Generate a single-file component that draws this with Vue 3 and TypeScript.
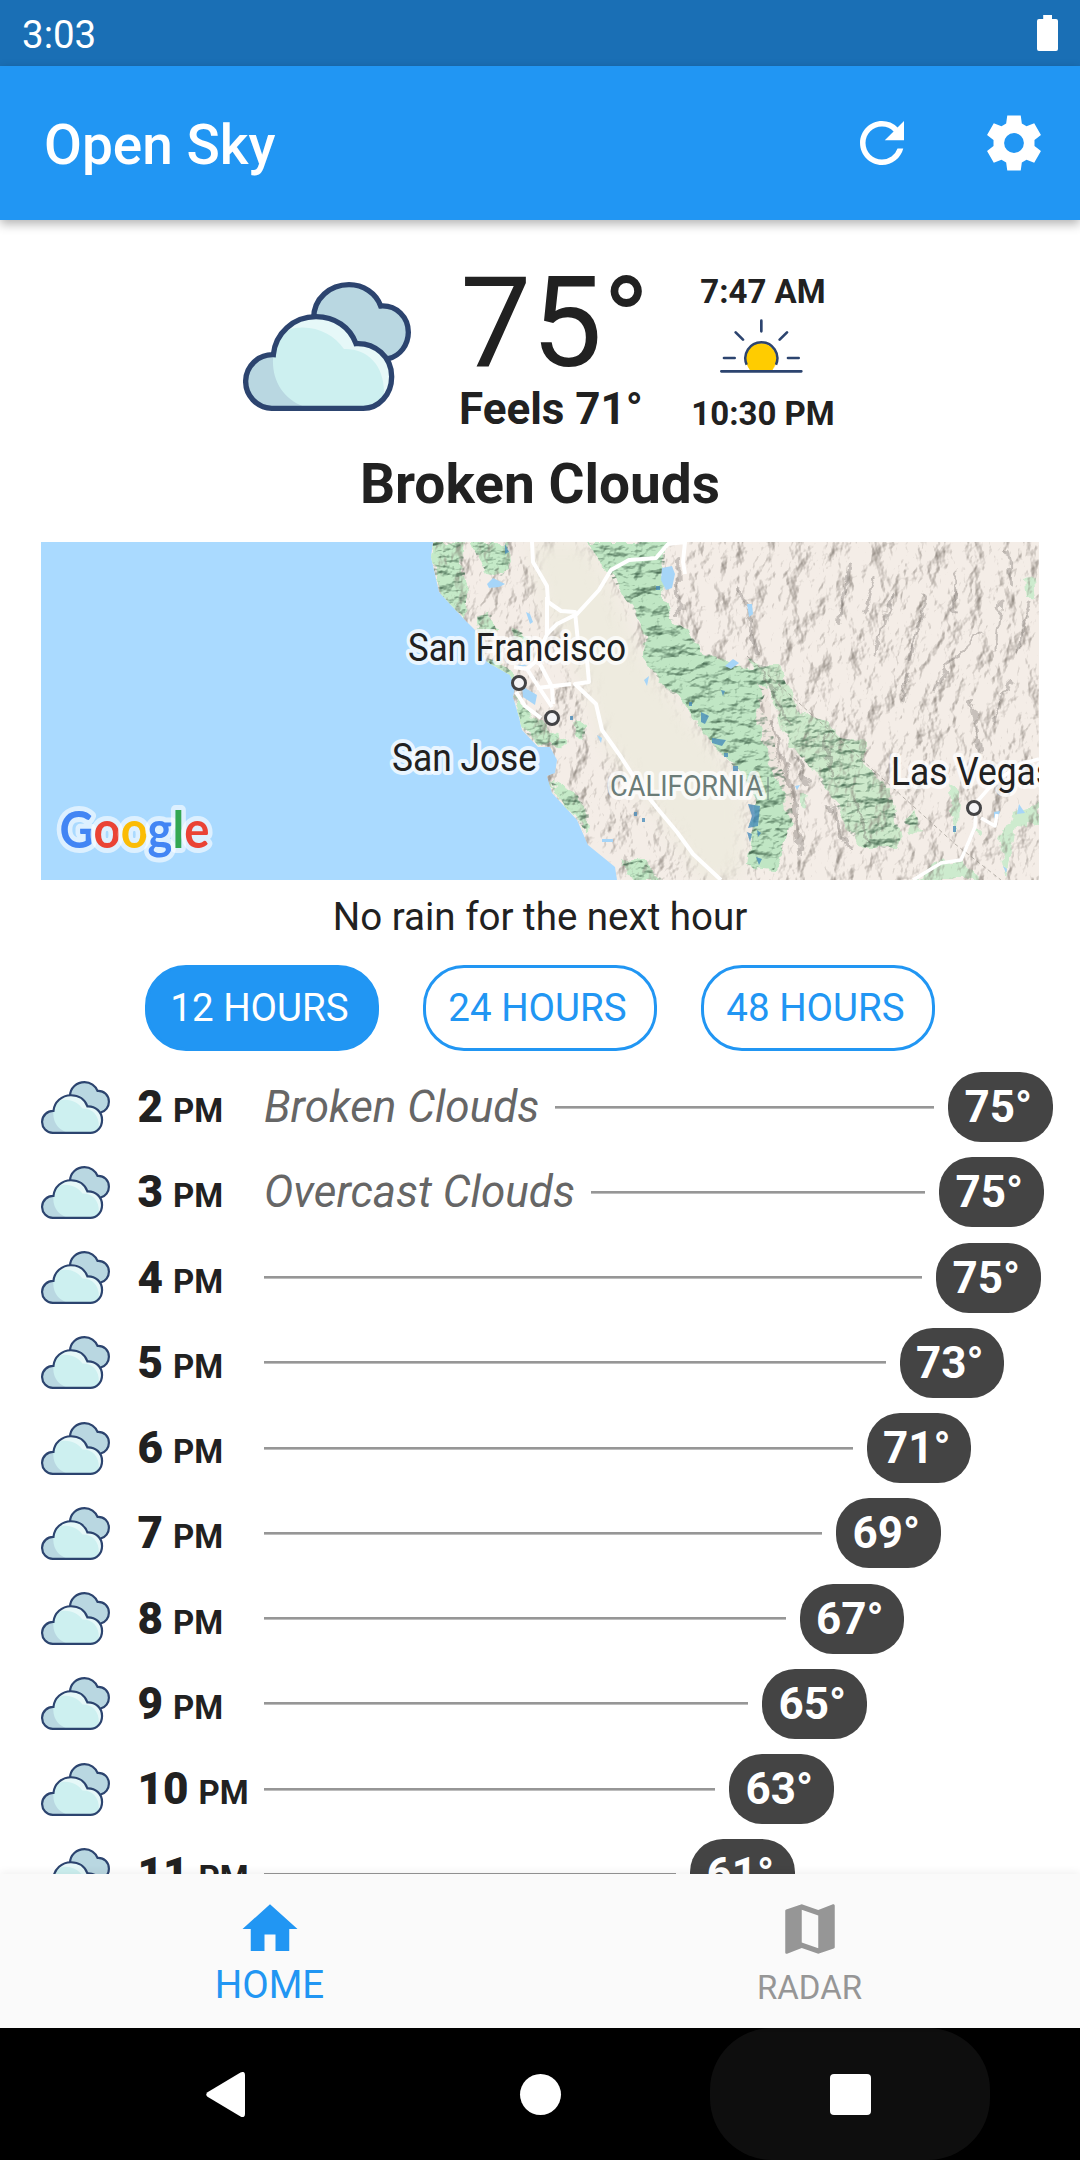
<script setup lang="ts">
import { ref } from 'vue'

interface Hour {
  hour: number
  label: string
  temp: number
  end: number
}

const ranges = ['12 HOURS', '24 HOURS', '48 HOURS']
const selected = ref(0)

// `end` is the left edge of the temperature pill inside the track
const hours: Hour[] = [
  { hour: 2, label: 'Broken Clouds', temp: 75, end: 684 },
  { hour: 3, label: 'Overcast Clouds', temp: 75, end: 675 },
  { hour: 4, label: '', temp: 75, end: 672 },
  { hour: 5, label: '', temp: 73, end: 635.5 },
  { hour: 6, label: '', temp: 71, end: 602.5 },
  { hour: 7, label: '', temp: 69, end: 572 },
  { hour: 8, label: '', temp: 67, end: 535.5 },
  { hour: 9, label: '', temp: 65, end: 498 },
  { hour: 10, label: '', temp: 63, end: 465 },
  { hour: 11, label: '', temp: 61, end: 426 },
]

const LAND =
  'M392 0 L390 15 L398 50 L422 76 L434 88 L438 108 L446 120 L469 133 L474 145 L472 155 L478 175 L481 188 L497 205 L509 205 L516 218 L514 231 L506 234 L511 251 L536 278 L547 303 L574 325 L576 338 L998 338 L998 0 Z'
const COAST_GREEN =
  'M392 0 L424 0 L422 20 L426 45 L424 74 L410 66 L398 50 L390 15 Z M430 0 L466 0 L469 18 L462 34 L445 30 L436 14 Z M436 74 L450 72 L456 90 L440 92 Z M446 116 L462 121 L472 132 L466 134 L450 124 Z M473 152 L490 172 L508 190 L525 200 L518 204 L498 204 L482 188 L478 172 Z M510 240 L536 252 L548 272 L546 290 L534 276 L514 250 Z M582 322 L600 318 L622 338 L592 338 Z M470 86 L484 92 L490 102 L480 104 Z M534 180 L545 183 L543 198 L536 194 Z'
const SIERRA =
  'M544 0 L628 0 L624 12 L622 52 L630 76 L648 90 L660 108 L684 120 L708 128 L720 124 L726 148 L718 166 L730 180 L736 216 L749 246 L752 276 L744 298 L733 328 L712 326 L706 322 L716 254 L699 230 L676 208 L658 184 L644 160 L626 148 L602 116 L605 95 L592 68 L579 50 L570 34 L558 18 Z'
const INYO =
  'M706 114 L722 124 L738 124 L752 160 L760 172 L782 178 L800 196 L824 200 L824 220 L850 250 L858 290 L860 306 L824 306 L808 290 L796 264 L776 234 L756 210 L742 186 L730 150 Z M863 280 L874 268 L880 286 L870 290 Z'
const EAST_GREEN =
  'M984 38 L992 36 L994 56 L986 54 Z M907 242 L918 250 L917 290 L911 280 Z M872 338 L896 320 L920 318 L940 338 Z M972 270 L984 266 L998 258 L998 286 L974 284 L966 338 L958 300 Z M932 286 L940 288 L936 294 Z M760 254 L768 254 L766 264 L760 262 Z'
const VALLEY =
  'M488 0 L545 0 L574 50 L600 110 L640 165 L690 225 L706 262 L700 338 L660 338 L640 305 L590 240 L556 190 L546 150 L534 125 L520 100 L502 60 Z'
</script>

<template>
  <div class="screen">
    <header class="status">
      <span>3:03</span>
      <svg class="battery" viewBox="0 0 21 36"><path fill="#fff" d="M6.2 0h8.8v4h4q2 0 2 2v28q0 2-2 2H2q-2 0-2-2V6q0-2 2-2h4.2z" /></svg>
    </header>

    <div class="appbar">
      <h1>Open Sky</h1>
      <svg class="icon" viewBox="0 0 24 24"><path fill="#fff" d="M17.65 6.35A7.958 7.958 0 0 0 12 4c-4.42 0-7.99 3.58-7.99 8s3.57 8 7.99 8c3.73 0 6.84-2.55 7.73-6h-2.08A5.99 5.99 0 0 1 12 18c-3.31 0-6-2.69-6-6s2.69-6 6-6c1.66 0 3.14.69 4.22 1.78L13 11h7V4l-2.35 2.35z" /></svg>
      <svg class="icon" viewBox="0 0 24 24"><path fill="#fff" fill-rule="evenodd" d="M9.55 2 L14.45 2 L14.85 4.95 L16.55 5.95 L19.35 4.85 L21.8 9.1 L19.45 10.95 L19.45 13.05 L21.8 14.9 L19.35 19.15 L16.55 18.05 L14.85 19.05 L14.45 22 L9.55 22 L9.15 19.05 L7.45 18.05 L4.65 19.15 L2.2 14.9 L4.55 13.05 L4.55 10.95 L2.2 9.1 L4.65 4.85 L7.45 5.95 L9.15 4.95 Z M12 8.4 A3.6 3.6 0 1 0 12 15.6 A3.6 3.6 0 1 0 12 8.4 Z" /></svg>
    </div>

    <svg width="0" height="0" class="defs">
      <symbol id="clouds" viewBox="69 96 504 387">
        <path fill="#b9d7e1" stroke="#2c446f" stroke-width="16" d="M281 205C281 145 330 104 387 104C430 104 468 130 482 168C530 165 565 202 565 247C565 285 540 318 505 326L400 330Z" />
        <path fill="#e6f8f8" d="M155 475A80.500 80.500 0 0 1 160 314C166 250 220 200 288 200C345 200 390 232 408 281C465 278 515 320 515 380C515 435 475 475 430 475Z" />
        <path fill="#cdf0f0" d="M155 475A80.500 80.500 0 0 1 160 314C166 280 180 254 214 236C280 222 340 250 372 297C440 294 494 345 492 430L470 475Z" />
        <path fill="#b9d7e1" d="M155 475A80.500 80.500 0 0 1 160 314C152 385 185 445 252 470Z" />
        <path fill="none" stroke="#2c446f" stroke-width="16" d="M155 475A80.500 80.500 0 0 1 160 314C166 250 220 200 288 200C345 200 390 232 408 281C465 278 515 320 515 380C515 435 475 475 430 475Z" />
      </symbol>
    </svg>

    <main class="body">
      <section class="now">
        <svg class="now-icon"><use href="#clouds" /></svg>
        <div class="temps">
          <div class="temp">75°</div>
          <div class="feels">Feels 71°</div>
        </div>
        <div class="sun">
          <span>7:47 AM</span>
          <svg viewBox="840 208 249 162">
            <circle cx="964" cy="326" r="48" fill="#ffe38a" />
            <path fill="#ffcc00" d="M921 305A43 43 0 0 1 1003 350L997 362H930Q912 335 921 305Z" />
            <path fill="none" stroke="#2c446f" stroke-width="7.500" d="M920 345A48 48 0 1 1 1008 345" />
            <path fill="#fff" d="M900 362h130v20H900z" />
            <path fill="none" stroke="#2c446f" stroke-width="8" stroke-linecap="round" d="M844 365H1084M964 213V245M887 248L909 270M1041 248L1019 270M852 325H884M1044 325H1076" />
          </svg>
          <span>10:30 PM</span>
        </div>
      </section>
      <h2 class="condition">Broken Clouds</h2>

      <svg class="map" viewBox="0 0 998 338">
        <defs>
          <filter id="relief" x="0" y="0" width="100%" height="100%" color-interpolation-filters="sRGB">
            <feTurbulence type="fractalNoise" baseFrequency="0.045 0.03" numOctaves="5" seed="12" result="n" />
            <feDiffuseLighting in="n" surfaceScale="6" diffuseConstant="1.1" lighting-color="#fff"><feDistantLight azimuth="205" elevation="52" /></feDiffuseLighting>
            <feColorMatrix values="0 0 0 0 .5  0 0 0 0 .47  0 0 0 0 .44  -1.2 0 0 0 .98" />
            <feGaussianBlur stdDeviation=".7" />
          </filter>
          <filter id="relief-fine" x="0" y="0" width="100%" height="100%" color-interpolation-filters="sRGB">
            <feTurbulence type="fractalNoise" baseFrequency="0.06 0.1" numOctaves="4" seed="21" result="n" />
            <feDiffuseLighting in="n" surfaceScale="5" diffuseConstant="1.1" lighting-color="#fff"><feDistantLight azimuth="235" elevation="52" /></feDiffuseLighting>
            <feColorMatrix values="0 0 0 0 .3  0 0 0 0 .44  0 0 0 0 .34  -1.3 0 0 0 1.08" />
            <feGaussianBlur stdDeviation=".6" />
          </filter>
          <filter id="rough" x="-5%" y="-5%" width="110%" height="110%">
            <feTurbulence type="fractalNoise" baseFrequency="0.07" numOctaves="3" seed="3" />
            <feDisplacementMap in="SourceGraphic" scale="14" xChannelSelector="R" yChannelSelector="G" />
          </filter>
          <filter id="soft"><feGaussianBlur stdDeviation="9" /></filter>
          <clipPath id="land"><path :d="LAND" /></clipPath>
          <clipPath id="forest"><path :d="SIERRA + COAST_GREEN + INYO" /></clipPath>
          <mask id="hills">
            <rect width="998" height="338" fill="#fff" />
            <path :d="VALLEY" fill="#000" filter="url(#soft)" />
            <path :d="SIERRA" fill="#000" />
          </mask>
        </defs>
        <rect width="998" height="338" fill="#aadaff" />
        <g clip-path="url(#land)">
          <rect width="998" height="338" fill="#f4ede7" />
          <path :d="VALLEY" fill="#eeebdf" filter="url(#soft)" />
          <g filter="url(#rough)">
            <path :d="SIERRA" fill="#c0e6c4" />
            <path :d="COAST_GREEN" fill="#c5eac8" />
            <path :d="INYO" fill="#cde9cb" />
            <path :d="EAST_GREEN" fill="#cdebce" />
            <path d="M718 140L726 148L734 190L752 250L760 300L752 290L742 250L728 215L716 176Z" fill="#eee5de" />
          </g>
          <g mask="url(#hills)"><rect width="998" height="338" filter="url(#relief)" /></g>
          <g clip-path="url(#forest)"><rect x="380" width="500" height="338" filter="url(#relief-fine)" /></g>
          <g fill="none" stroke="#6f6b66" stroke-linecap="round" opacity=".34" filter="url(#rough)">
            <path stroke-width="4" d="M636 18L638 74M700 48L716 110M810 20L802 60L800 82M966 8L970 42M730 180L742 220L754 262L758 312M755 215L768 245M786 262L808 310" />
            <path stroke-width="3" d="M722 130L746 180M780 190L792 232M812 255L828 300M835 36L824 70M850 50L834 112M915 30L914 70M960 60L954 108M940 90L906 124L894 150M885 55L868 118M990 60L976 110M868 130L862 160M930 160L940 210M970 140L952 180" />
          </g>
          <g fill="#a6d5f8">
            <path d="M621 26l10-2l3 8l-3 14l-6 2l-5-10zM706 62l5 0l1 10l-4 3zM684 124l8-7l6 4l-8 6zM446 42l6-6l12 6l-6 3l-10 1zM485 70l4 2l3 8l-3 2zM473 124l16-2l-10 4zM481 144l15 9l-2 10l-12-8zM556 193l5 3l-1 5zM603 138l5-4l-2 10zM561 297h11v3h-11zM953 270l6-1l-2 6l-4 1zM978 262l6 9l-8 1zM754 244l5-1l-3 5zM962 324l4 3l-1 4z" />
          </g>
          <g fill="#3f86b8" opacity=".75">
            <path d="M648 160h3v4h-3zM660 170l8 4l-4 8l-4-2zM671 196l14 2l-4 6l-10-3zM683 211h4v4h-4zM692 224h5v5h-5zM707 262l12 2l-2 20l-10 2l4-12zM706 290l5 2l-2 8zM716 288l4 3l-3 4zM715 315l6 2l-3 6zM615 44h4v4h-4zM593 270h3v4h-3zM601 276h3v4h-3zM464 2l4 8l-4 2zM912 284h3v6h-3zM680 148l4 1l-2 5zM529 174h3v4h-3z" />
          </g>
          <g fill="none" stroke="#fff" stroke-width="4" stroke-linejoin="round">
            <path d="M491 0L492 20L506 44L507 60L520 69L534 70L537 100L546 118L548 140L534 142L555 162L561 188L580 215L598 243L616 266L636 290L652 312L680 338" />
            <path d="M506 55L506 92L516 82L536 72L558 48L570 28L588 18L615 16L627 2L644 0L642 20L644 32" />
            <path d="M473 125L486 127L494 120L506 92M486 127L495 141L511 165M496 146L530 142M499 122L511 145L512 162M475 150L484 164L500 176M499 118L520 110" />
            <path stroke-width="3.500" d="M935 268L934 285L920 318L900 321L872 338M934 262L948 246L954 240L980 222L998 217M940 276L954 284L956 272" />
          </g>
          <path d="M706 114L914 302L960 338" fill="none" stroke="#8d8881" stroke-width="1" stroke-dasharray="4 3" opacity=".6" />
        </g>
        <g fill="#f4f4f6" stroke="#434345" stroke-width="3">
          <circle cx="478" cy="141" r="6.500" /><circle cx="511" cy="176" r="6.500" /><circle cx="933" cy="266" r="6.500" />
        </g>
        <g class="place">
          <text x="367" y="118.500" textLength="218" lengthAdjust="spacingAndGlyphs">San Francisco</text>
          <text x="351" y="228.500" textLength="145" lengthAdjust="spacingAndGlyphs">San Jose</text>
          <text x="850" y="243" textLength="163" lengthAdjust="spacingAndGlyphs">Las Vegas</text>
          <text class="state" x="569" y="254" textLength="153" lengthAdjust="spacingAndGlyphs">CALIFORNIA</text>
        </g>
        <path d="M727 235v23" stroke="#6b7c78" stroke-width="1" />
        <text class="google" x="18.500" y="306" textLength="150" lengthAdjust="spacingAndGlyphs"><tspan fill="#4285f4">G</tspan><tspan fill="#ea4335">o</tspan><tspan fill="#fbbc05">o</tspan><tspan fill="#4285f4">g</tspan><tspan fill="#34a853">l</tspan><tspan fill="#ea4335">e</tspan></text>
      </svg>

      <p class="rain">No rain for the next hour</p>

      <div class="chips">
        <button v-for="(r, i) in ranges" :key="r" class="chip" :class="{ on: i === selected }" @click="selected = i">{{ r }}</button>
      </div>

      <ul class="hours">
        <li v-for="h in hours" :key="h.hour">
          <svg class="hour-icon"><use href="#clouds" /></svg>
          <div class="when"><b>{{ h.hour }}</b> <small>PM</small></div>
          <div class="track" :style="{ width: h.end + 'px' }">
            <i v-if="h.label">{{ h.label }}</i>
            <div class="rule"></div>
          </div>
          <div class="pill">{{ h.temp }}°</div>
        </li>
      </ul>
    </main>

    <nav class="tabs">
      <div class="tab active">
        <svg class="icon" viewBox="0 0 24 24"><path fill="currentColor" d="M10 20v-6h4v6h5v-8h3L12 3 2 12h3v8z" /></svg>
        <span>HOME</span>
      </div>
      <div class="tab">
        <svg class="icon" viewBox="0 0 24 24"><path fill="currentColor" d="M20.500 3l-.16.03L15 5.100 9 3 3.360 4.900c-.21.07-.36.25-.36.48V20.500c0 .28.22.5.5.5l.16-.03L9 18.900l6 2.100 5.640-1.900c.21-.07.36-.25.36-.48V3.500c0-.28-.22-.5-.5-.5zM15 19l-6-2.110V5l6 2.110V19z" /></svg>
        <span>RADAR</span>
      </div>
    </nav>

    <footer class="system">
      <div class="key"><svg width="39" height="45" viewBox="0 0 39 45"><path fill="#fff" d="M34.500.6Q39-1.500 39 3V42Q39 46.500 34.500 44.400L1.500 24.800Q-1 22.500 1.500 20.200Z" /></svg></div>
      <div class="key"><span class="dot"></span></div>
      <div class="key pressed"><span class="square"></span></div>
    </footer>
  </div>
</template>

<style>
body { margin: 0; background: #fff; }
</style>

<style scoped>
* { box-sizing: border-box; }
.screen {
  width: 1080px;
  height: 2160px;
  overflow: hidden;
  display: flex;
  flex-direction: column;
  background: #fff;
  color: #212121;
  font-family: Roboto, "Liberation Sans", sans-serif;
}
.defs { position: absolute; }
.status {
  flex: none;
  height: 66px;
  padding: 3px 22px 0;
  display: flex;
  align-items: center;
  justify-content: space-between;
  background: #1a6fb5;
  color: #fff;
  font-size: 38.5px;
}
.battery { width: 21px; height: 36px; margin-top: -3px; }
.appbar {
  flex: none;
  height: 154px;
  padding: 0 33px 0 44px;
  display: flex;
  align-items: center;
  background: #2196f3;
  color: #fff;
  box-shadow: 0 4px 10px rgba(0, 0, 0, .3);
  z-index: 1;
}
.appbar h1 {
  flex: 1;
  margin: 0;
  padding-top: 3px;
  font-size: 55px;
  font-weight: 500;
}
.icon { width: 66px; height: 66px; display: block; }
.appbar .icon + .icon { margin-left: 66px; }
.body {
  flex: 1;
  min-height: 0;
  overflow: hidden;
  display: flex;
  flex-direction: column;
}
.now { display: flex; height: 232px; padding-left: 243px; flex: none; }
.now-icon { width: 168px; height: 129px; margin-top: 62px; }
.temps { width: 194px; margin: 40px 0 0 47px; text-align: center; }
.temp { font-size: 126.5px; line-height: 126px; }
.feels { font-size: 44px; line-height: 46px; font-weight: 700; white-space: nowrap; margin-left: -8px; }
.sun {
  width: 160px;
  margin: 52px 0 0 31px;
  display: flex;
  flex-direction: column;
  align-items: center;
  font-size: 33px;
  line-height: 40px;
  font-weight: 700;
}
.sun svg { width: 83px; height: 54px; margin: 7px 4px 21px 0; }
.condition { margin: 0; text-align: center; font-size: 55px; line-height: 64px; flex: none; }
.map { width: 998px; height: 338px; margin: 26px 41px 0; flex: none; display: block; }
.place text {
  font-size: 38px;
  fill: #212121;
  stroke: rgba(255, 255, 255, .75);
  stroke-width: 8px;
  stroke-linejoin: round;
  paint-order: stroke;
}
.place .state { font-size: 29px; fill: #6b7c78; }
.google {
  font-family: Lato, sans-serif;
  font-size: 52px;
  font-weight: 700;
  stroke: rgba(255, 255, 255, .6);
  stroke-width: 10px;
  stroke-linejoin: round;
  paint-order: stroke;
}
.rain { margin: 14px 0 0; text-align: center; font-size: 38.5px; line-height: 46px; flex: none; }
.chips { display: flex; justify-content: center; gap: 44px; margin-top: 25px; flex: none; }
.chip {
  width: 234px;
  height: 86px;
  padding: 0 5px 2px 0;
  border: 3px solid #2196f3;
  border-radius: 41px;
  background: #fff;
  color: #2196f3;
  font: 400 38.5px Roboto, sans-serif;
}
.chip.on { background: #2196f3; color: #fff; }
.hours { list-style: none; margin: 13.5px 0 0; padding: 0 0 0 41px; flex: none; }
.hours li { display: flex; align-items: center; height: 85.25px; }
.hour-icon { width: 69px; height: 53px; flex: none; }
.when { width: 126.5px; margin-left: 27.500px; font-size: 44px; font-weight: 700; white-space: nowrap; flex: none; }
.when small { font-size: 33px; margin-left: -1px; }
.track { display: flex; align-items: center; padding-right: 14px; flex: none; }
.track i { font-size: 44px; color: #666; margin-right: 16px; white-space: nowrap; }
.rule { flex: 1; height: 3px; background: linear-gradient(#969696 2px, #bdbdbd 2px); }
.pill {
  width: 104.5px;
  height: 70px;
  padding-left: 16.5px;
  border-radius: 33px;
  background: #444;
  color: #fff;
  font-size: 44px;
  font-weight: 700;
  line-height: 70px;
  flex: none;
}
.tabs {
  flex: none;
  height: 154px;
  display: flex;
  background: #fafafa;
  box-shadow: 0 -2px 8px rgba(0, 0, 0, .06);
  z-index: 1;
}
.tab {
  flex: 1;
  padding-top: 22px;
  display: flex;
  flex-direction: column;
  align-items: center;
  color: #969696;
  font-size: 33px;
  line-height: 52px;
}
.tab span { margin-right: 1px; }
.tab.active { color: #2196f3; font-size: 38.5px; line-height: 46px; }
.system { flex: none; height: 132px; background: #000; display: flex; justify-content: center; gap: 30px; }
.key { width: 280px; height: 132px; display: flex; align-items: center; justify-content: center; border-radius: 62px; }
.key:first-child svg { margin-right: 9px; }
.pressed { background: #0e0e0e; }
.dot { width: 41px; height: 41px; border-radius: 50%; background: #fff; }
.square { width: 41px; height: 41px; border-radius: 4px; background: #fff; }
</style>
